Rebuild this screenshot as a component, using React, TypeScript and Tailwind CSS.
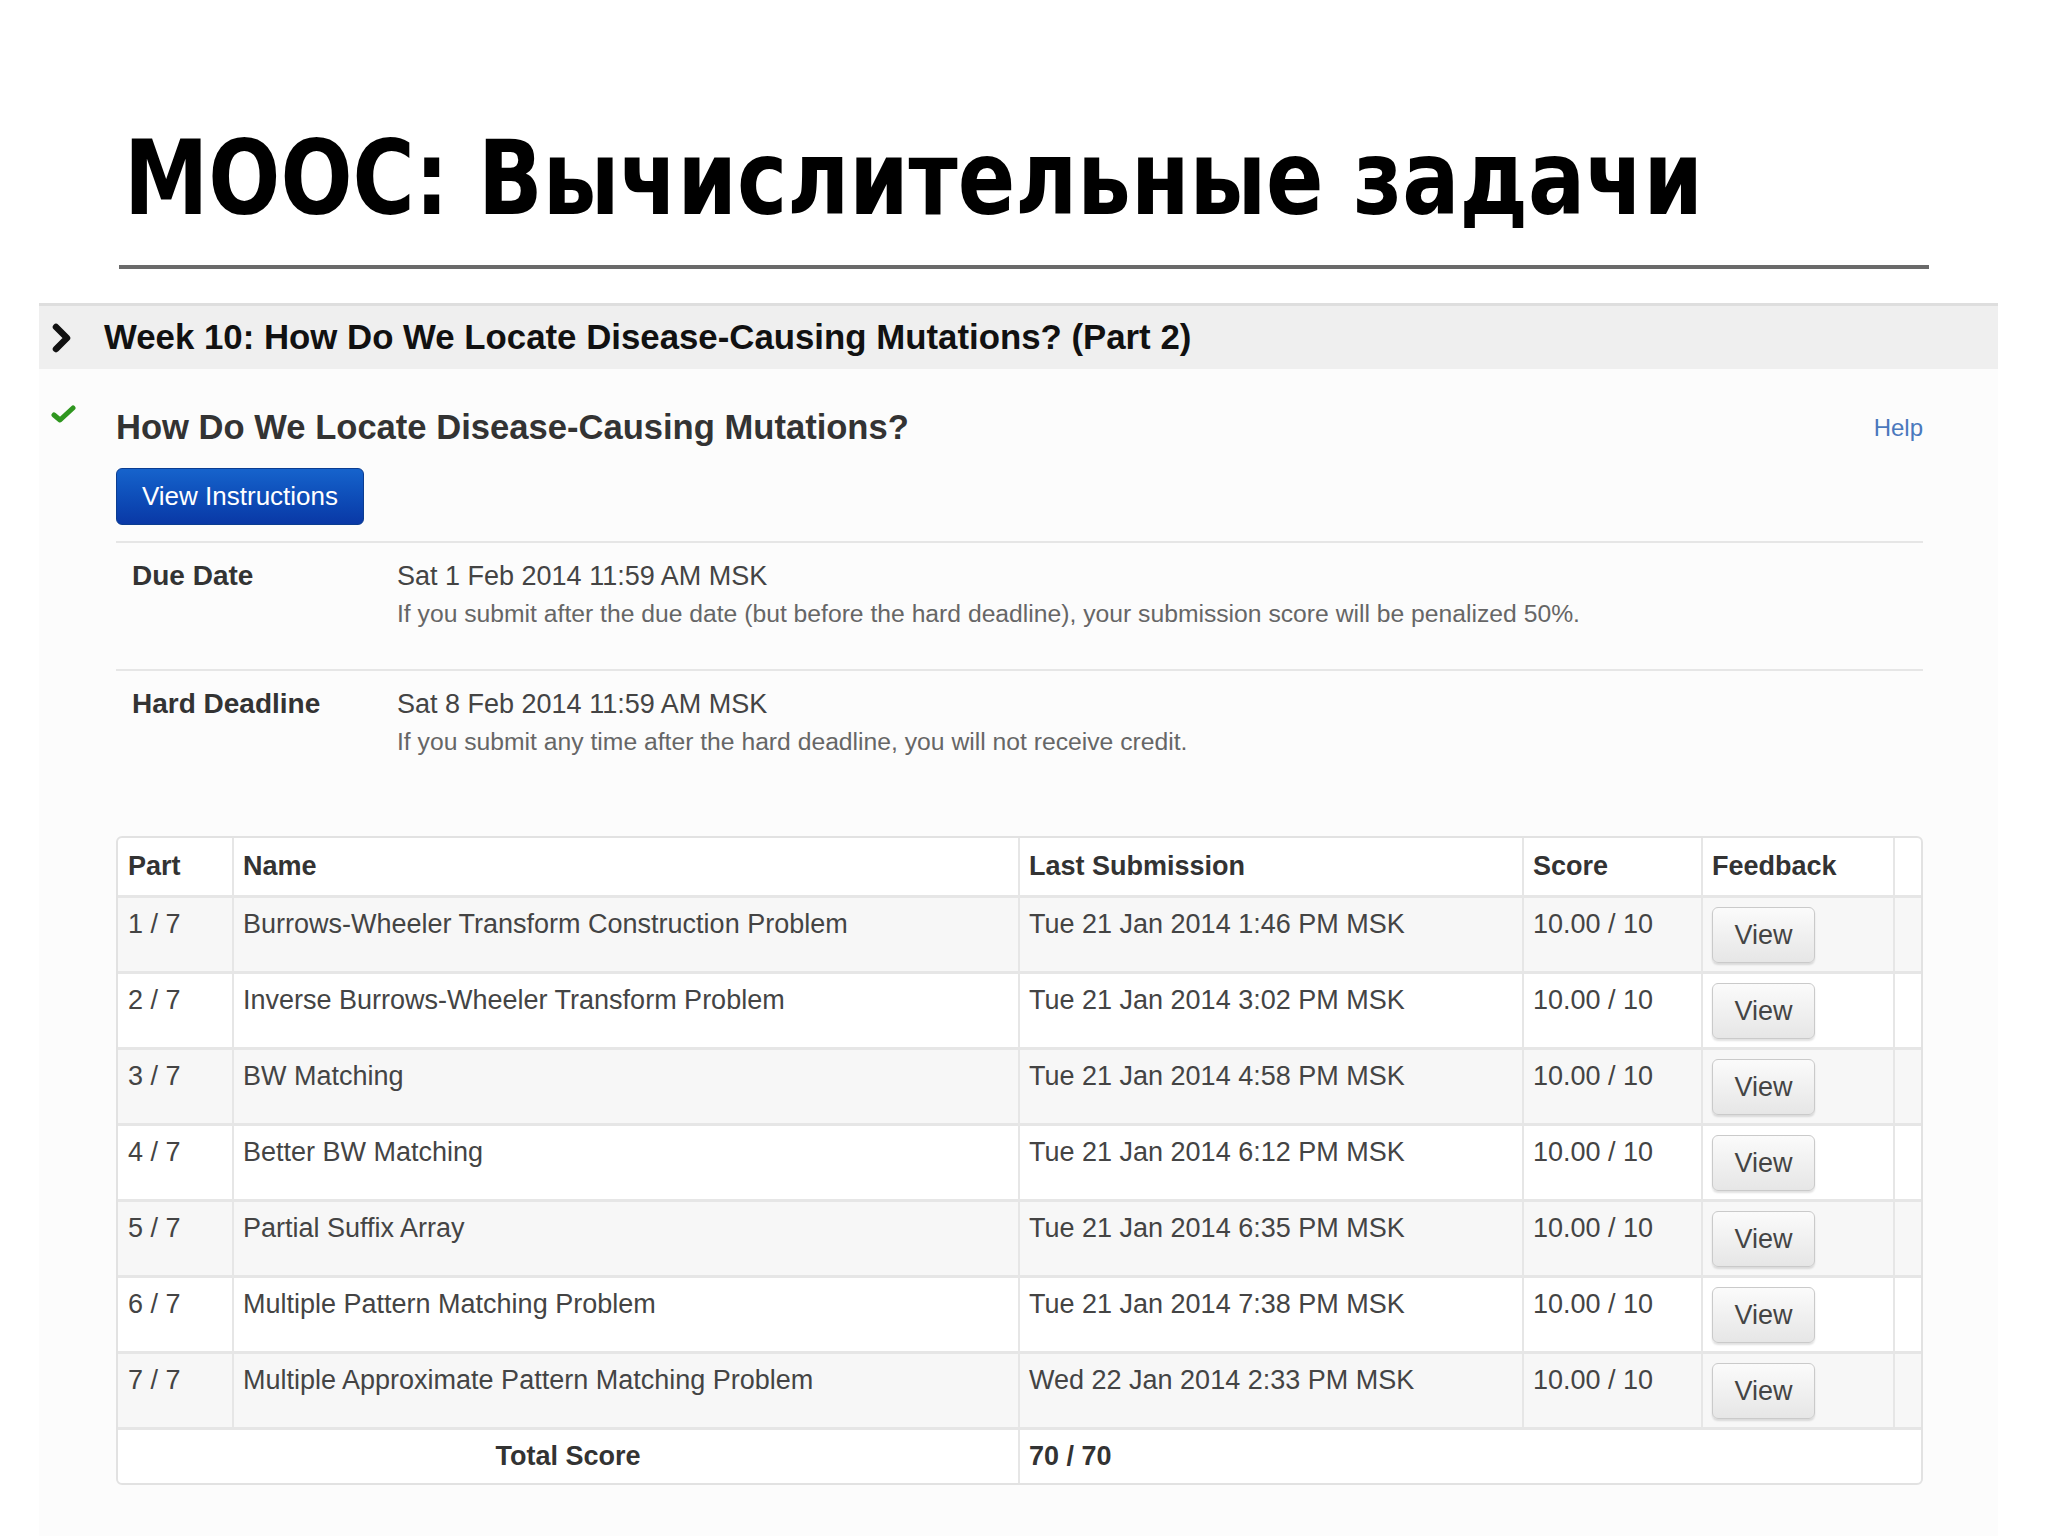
import React from 'react';

const rows = [
  { part: '1 / 7', name: 'Burrows-Wheeler Transform Construction Problem', last: 'Tue 21 Jan 2014 1:46 PM MSK' },
  { part: '2 / 7', name: 'Inverse Burrows-Wheeler Transform Problem', last: 'Tue 21 Jan 2014 3:02 PM MSK' },
  { part: '3 / 7', name: 'BW Matching', last: 'Tue 21 Jan 2014 4:58 PM MSK' },
  { part: '4 / 7', name: 'Better BW Matching', last: 'Tue 21 Jan 2014 6:12 PM MSK' },
  { part: '5 / 7', name: 'Partial Suffix Array', last: 'Tue 21 Jan 2014 6:35 PM MSK' },
  { part: '6 / 7', name: 'Multiple Pattern Matching Problem', last: 'Tue 21 Jan 2014 7:38 PM MSK' },
  { part: '7 / 7', name: 'Multiple Approximate Pattern Matching Problem', last: 'Wed 22 Jan 2014 2:33 PM MSK' },
];

function Chevron() {
  return (
    <svg width="24" height="30" viewBox="0 0 24 30" className="shrink-0">
      <path d="M6 4 L17 15 L6 26" fill="none" stroke="#111" strokeWidth="6.5" strokeLinejoin="round" strokeLinecap="round" />
    </svg>
  );
}

function Check() {
  return (
    <svg width="26" height="20" viewBox="0 0 26 20">
      <path d="M3 11 L9 16 L22 4" fill="none" stroke="#2f961f" strokeWidth="5" strokeLinecap="round" strokeLinejoin="round" />
    </svg>
  );
}

function ViewButton() {
  return (
    <button className="mt-[9px] h-[56px] w-[103px] rounded-[6px] border border-[#cacaca] bg-gradient-to-b from-[#fbfbfb] to-[#e6e6e6] text-[27px] text-[#444] shadow-[0_2px_2px_rgba(0,0,0,0.12)]">
      View
    </button>
  );
}

function DeadlineRow({ label, date, note }: { label: string; date: string; note: string }) {
  return (
    <div className="flex h-[126px] pt-[15px]">
      <div className="w-[281px] pl-[16px] text-[28px] font-bold leading-[36px] text-[#333]">{label}</div>
      <div>
        <div className="text-[27px] leading-[36px] text-[#444]">{date}</div>
        <div className="mt-[2px] text-[24.7px] leading-[36px] text-[#666]">{note}</div>
      </div>
    </div>
  );
}

export default function App() {
  return (
    <div className="h-[1536px] w-[2048px] overflow-hidden bg-white">
      <div className="h-[123px]" />
      <div className="pl-[124px]">
        <h1 className="inline-block origin-left scale-x-[0.815] whitespace-nowrap font-['DejaVu_Sans',sans-serif] text-[104px] font-bold leading-[110px] text-black">
          MOOC: Вычислительные задачи
        </h1>
      </div>
      <div className="ml-[119px] mt-[32px] h-[4px] w-[1810px] bg-[#6a6a6a]" />

      <section className="ml-[39px] mt-[34px] w-[1959px] bg-[#fcfcfc] font-['Liberation_Sans',Arial,sans-serif]">
        <div className="flex h-[66px] items-center border-t-[3px] border-[#dedede] bg-[#efefef] pl-[11px]">
          <Chevron />
          <div className="ml-[30px] text-[34.8px] font-bold text-[#111]">
            Week 10: How Do We Locate Disease-Causing Mutations? (Part 2)
          </div>
        </div>

        <div className="flex pb-[60px]">
          <div className="w-[77px] pl-[12px] pt-[35px]">
            <Check />
          </div>
          <div className="w-[1807px]">
            <div className="flex items-center justify-between pt-[33px]">
              <div className="text-[34.6px] font-bold text-[#333]">How Do We Locate Disease-Causing Mutations?</div>
              <a className="text-[24px] text-[#4a78bd]">Help</a>
            </div>
            <button className="mt-[14px] flex h-[57px] w-[248px] items-center justify-center rounded-[6px] border border-[#0b3d91] bg-gradient-to-b from-[#1663cc] to-[#0a38a6] text-[26px] text-white">
              View Instructions
            </button>
            <div className="mt-[16px] h-[2px] bg-[#e6e6e6]" />
            <DeadlineRow
              label="Due Date"
              date="Sat 1 Feb 2014 11:59 AM MSK"
              note="If you submit after the due date (but before the hard deadline), your submission score will be penalized 50%."
            />
            <div className="h-[2px] bg-[#e6e6e6]" />
            <DeadlineRow
              label="Hard Deadline"
              date="Sat 8 Feb 2014 11:59 AM MSK"
              note="If you submit any time after the hard deadline, you will not receive credit."
            />

            <div className="mt-[39px] overflow-hidden rounded-[6px] border-2 border-[#e2e2e2] bg-white">
              <table className="w-full table-fixed border-collapse text-[27px] text-[#444]">
                <colgroup>
                  <col className="w-[115px]" />
                  <col className="w-[786px]" />
                  <col className="w-[504px]" />
                  <col className="w-[179px]" />
                  <col className="w-[192px]" />
                  <col />
                </colgroup>
                <thead>
                  <tr className="h-[59px] text-left text-[27px] font-bold text-[#333]">
                    <th className="pl-[10px]">Part</th>
                    <th className="border-l-2 border-[#e6e6e6] pl-[9px]">Name</th>
                    <th className="border-l-2 border-[#e6e6e6] pl-[9px]">Last Submission</th>
                    <th className="border-l-2 border-[#e6e6e6] pl-[9px]">Score</th>
                    <th className="border-l-2 border-[#e6e6e6] pl-[9px]">Feedback</th>
                    <th className="border-l-2 border-[#e6e6e6]" />
                  </tr>
                </thead>
                <tbody>
                  {rows.map((r, i) => (
                    <tr key={r.part} className={`h-[76px] border-t-[3px] border-[#e6e6e6] align-top ${i % 2 === 0 ? 'bg-[#f7f7f7]' : 'bg-white'}`}>
                      <td className="pl-[10px] pt-[8px] leading-[36px]">{r.part}</td>
                      <td className="border-l-2 border-[#e6e6e6] pl-[9px] pt-[8px] leading-[36px]">{r.name}</td>
                      <td className="border-l-2 border-[#e6e6e6] pl-[9px] pt-[8px] leading-[36px]">{r.last}</td>
                      <td className="border-l-2 border-[#e6e6e6] pl-[9px] pt-[8px] leading-[36px]">10.00 / 10</td>
                      <td className="border-l-2 border-[#e6e6e6] pl-[9px]">
                        <ViewButton />
                      </td>
                      <td className="border-l-2 border-[#e6e6e6]" />
                    </tr>
                  ))}
                  <tr className="h-[54px] border-t-[3px] border-[#e6e6e6] text-[27px] font-bold text-[#333]">
                    <td colSpan={2} className="text-center">Total Score</td>
                    <td colSpan={4} className="border-l-2 border-[#e6e6e6] pl-[9px]">70 / 70</td>
                  </tr>
                </tbody>
              </table>
            </div>
          </div>
        </div>
      </section>
    </div>
  );
}
